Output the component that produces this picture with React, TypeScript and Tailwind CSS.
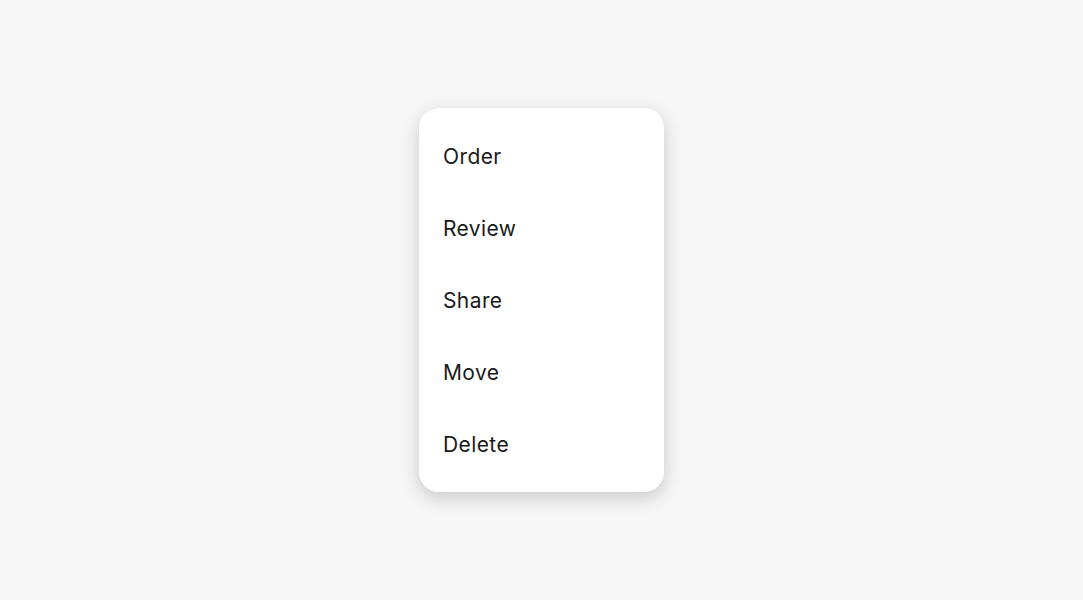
const items = ['Order', 'Review', 'Share', 'Move', 'Delete'];

export default function App() {
  return (
    <div className="min-h-[600px] h-screen w-full bg-[#f6f6f6] flex items-center justify-center font-['Inter',sans-serif]">
      <ul className="w-[245px] py-3 bg-white rounded-[20px] shadow-[0_6px_18px_rgba(0,0,0,0.18)]">
        {items.map((item) => (
          <li key={item} className="h-[72px] flex items-center px-6 pt-[2px] text-[21px] text-[#1a1a1a] tracking-[0.4px]">
            {item}
          </li>
        ))}
      </ul>
    </div>
  );
}
